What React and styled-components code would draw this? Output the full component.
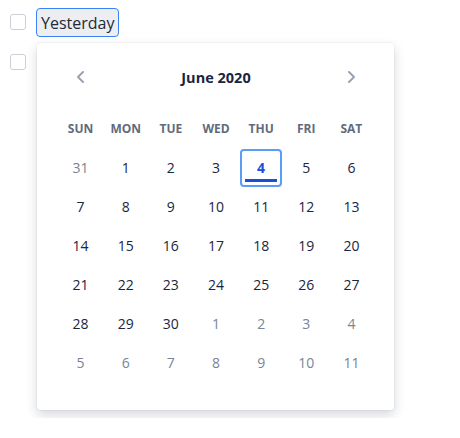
import React from 'react';
import styled, {createGlobalStyle} from 'styled-components';

const Global = createGlobalStyle`
  body {
    margin: 0;
    background: #fff;
    font-family: "Open Sans", "Noto Sans", sans-serif;
  }
`

const Page = styled.div`
  padding: 8px 10px;
  display: flex;
  flex-direction: column;
  gap: 6px;
`

const Row = styled.div`
  display: flex;
  align-items: flex-start;
  gap: 10px;
`

const Check = styled.span`
  width: 16px;
  height: 16px;
  box-sizing: border-box;
  border: 1px solid #cbd0d8;
  border-radius: 3px;
  background: #fff;
  margin-top: ${p => p.$top}px;
  flex-shrink: 0;
`

const Trigger = styled.button`
  font-family: inherit;
  font-size: 16px;
  height: 29px;
  padding: 0 4px;
  color: #1f2937;
  background: #eceef2;
  border: 1px solid #3b82f6;
  border-radius: 4px;
`

const Card = styled.div`
  width: 357px;
  box-sizing: border-box;
  margin-left: 1px;
  padding: 14px 20px 28px 21px;
  background: #fff;
  border-radius: 4px;
  box-shadow: 0 0 0 1px rgba(0, 0, 0, 0.03), 0 5px 12px rgba(30, 41, 59, 0.18);
`

const Grid = styled.div`
  display: grid;
  grid-template-columns: repeat(7, 1fr);
`

const Nav = styled(Grid)`
  height: 40px;
  align-items: center;
  margin-bottom: 12px;
`

const Title = styled.div`
  grid-column: 2 / 7;
  text-align: center;
  font-weight: 700;
  font-size: 14.5px;
  color: #1a2540;
`

const Arrow = styled.div`
  display: flex;
  justify-content: center;
  align-items: center;
  color: #9aa3b2;
`

const Weekday = styled.div`
  height: 39px;
  display: flex;
  align-items: center;
  justify-content: center;
  font-size: 12px;
  font-weight: 700;
  color: #5f6b7d;
`

const Day = styled.div`
  height: 39px;
  display: flex;
  align-items: center;
  justify-content: center;
  font-size: 14px;
  color: ${p => (p.$muted ? '#7a8494' : '#1a2540')};
`

const Selected = styled.div`
  position: relative;
  width: 42px;
  height: 38px;
  box-sizing: border-box;
  border: 2px solid #5b9cf6;
  border-radius: 4px;
  display: flex;
  align-items: center;
  justify-content: center;
  font-weight: 700;
  color: #1d4ed8;

  &::after {
    content: "";
    position: absolute;
    left: 3px;
    right: 3px;
    bottom: 3px;
    height: 3px;
    background: #1d4ed8;
  }
`

const Chevron = ({dir}) => (
    <svg width="12" height="14" viewBox="0 0 12 14" fill="none" stroke="currentColor" strokeWidth="2"
         strokeLinecap="round" strokeLinejoin="round">
        {dir === 'left' ? <path d="M8 2 L3 7 L8 12"/> : <path d="M4 2 L9 7 L4 12"/>}
    </svg>
)

const weekdays = ['SUN', 'MON', 'TUE', 'WED', 'THU', 'FRI', 'SAT']

const days = [31, ...Array.from({length: 30}, (_, i) => i + 1), ...Array.from({length: 11}, (_, i) => i + 1)]
    .map((n, i) => ({n, muted: i === 0 || i > 30, selected: i === 4}))

const App = () => {
    return (
        <Page>
            <Global/>
            <Row>
                <Check $top={6}/>
                <Trigger>Yesterday</Trigger>
            </Row>
            <Row>
                <Check $top={11}/>
                <Card>
                    <Nav>
                        <Arrow><Chevron dir="left"/></Arrow>
                        <Title>June 2020</Title>
                        <Arrow><Chevron dir="right"/></Arrow>
                    </Nav>
                    <Grid>
                        {weekdays.map(w => <Weekday key={w}>{w}</Weekday>)}
                        {days.map((d, i) => (
                            <Day key={i} $muted={d.muted}>
                                {d.selected ? <Selected>{d.n}</Selected> : d.n}
                            </Day>
                        ))}
                    </Grid>
                </Card>
            </Row>
        </Page>
    );
};

export default App;
